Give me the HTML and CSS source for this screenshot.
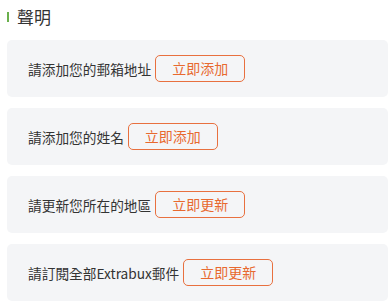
FILE: index.html
```html
<!DOCTYPE html>
<html lang="zh-Hant">
<head>
    <meta charset="UTF-8">
    <meta name="viewport" content="width=device-width, initial-scale=1.0">
    <title>聲明</title>
    <link rel="stylesheet" href="styles.css">
</head>
<body>
    <div class="notice">
        <div class="notice-title">
            <span class="title-bar"></span>
            <h2>聲明</h2>
        </div>
        <div class="notice-list">
            <div class="notice-item">
                <span class="item-text">請添加您的郵箱地址</span>
                <button class="action-btn">立即添加</button>
            </div>
            <div class="notice-item">
                <span class="item-text">請添加您的姓名</span>
                <button class="action-btn">立即添加</button>
            </div>
            <div class="notice-item">
                <span class="item-text">請更新您所在的地區</span>
                <button class="action-btn">立即更新</button>
            </div>
            <div class="notice-item">
                <span class="item-text">請訂閱全部Extrabux郵件</span>
                <button class="action-btn">立即更新</button>
            </div>
        </div>
    </div>
</body>
</html>
```

FILE: styles.css
```css
/* Global */
body, html {
    margin: 0;
    padding: 0;
    background-color: #fff;
    font-family: "Noto Sans CJK TC", "Noto Sans", sans-serif;
    color: #333;
}

.notice {
    padding: 5px 1px 0 7px;
}

/* Title */
.notice-title {
    display: flex;
    align-items: center;
    height: 24px;
}

.title-bar {
    width: 2px;
    height: 10px;
    background-color: #6ab04c;
    margin-right: 8px;
}

.notice-title h2 {
    margin: 0;
    font-size: 17px;
    font-weight: 400;
    line-height: 24px;
}

/* List */
.notice-list {
    display: flex;
    flex-direction: column;
    gap: 11px;
    margin-top: 11px;
}

.notice-item {
    display: flex;
    align-items: center;
    height: 57px;
    padding-left: 21px;
    background-color: #f4f5f7;
    border-radius: 5px;
}

.item-text {
    font-size: 13.7px;
    margin-right: 4px;
}

.action-btn {
    height: 27px;
    padding: 0 16px;
    background: transparent;
    border: 1px solid #e8703f;
    border-radius: 5px;
    color: #e8692f;
    font-family: inherit;
    font-size: 14px;
    line-height: 25px;
    cursor: pointer;
}
```
